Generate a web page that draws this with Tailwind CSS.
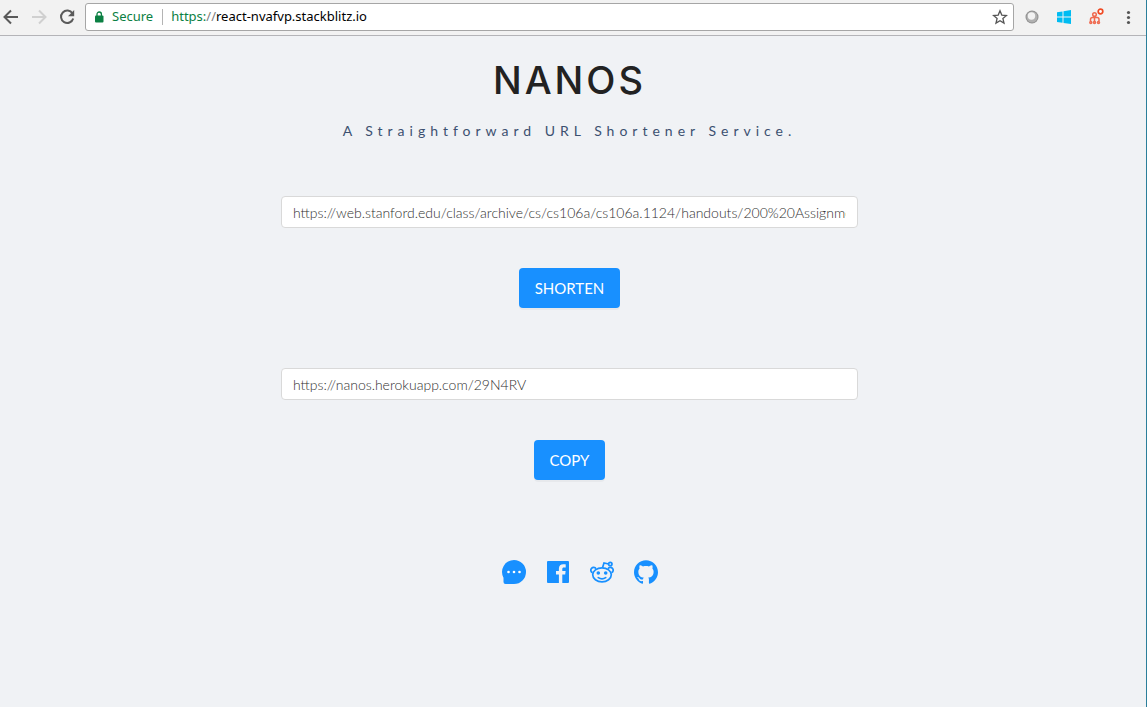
<!DOCTYPE html>
<html lang="en">
<head>
<meta charset="utf-8">
<meta name="viewport" content="width=device-width, initial-scale=1">
<title>Nanos</title>
<script src="https://cdn.jsdelivr.net/npm/@tailwindcss/browser@4"></script>
</head>
<body class="flex min-h-screen flex-col border-r border-[#2b7f9b] bg-[#f0f2f5]">
<header class="flex h-9 shrink-0 items-center border-b border-[#b4b4b8] bg-[#f2f2f2] pb-px font-['Noto_Sans',sans-serif]">
  <nav class="flex w-[85px] shrink-0 items-center gap-3" aria-label="Browser">
    <button aria-label="Back" class="size-4 ml-[3px] text-[#5a5a5a]"><svg class="size-4" viewBox="0 0 16 16" fill="none" stroke="currentColor" stroke-width="2"><path d="M15 8H2M8 1.5 1.5 8 8 14.500"/></svg></button>
    <button aria-label="Forward" class="size-4 text-[#d0d0d0]"><svg class="size-4" viewBox="0 0 16 16" fill="none" stroke="currentColor" stroke-width="2"><path d="M1 8h13M8 1.500 14.500 8 8 14.500"/></svg></button>
    <button aria-label="Reload" class="size-4 text-[#5a5a5a]"><svg class="size-4" viewBox="0 0 16 16" fill="none" stroke="currentColor" stroke-width="2"><path d="M13.500 4.500A6.200 6.200 0 1 0 14.200 9.500"/><path d="M15.200 1v6.200H9z" fill="currentColor" stroke="none"/></svg></button>
  </nav>
  <div class="flex h-7 min-w-0 flex-1 items-center rounded-[3px] border border-[#a6a6a6] bg-white px-2 text-[13px]">
    <svg class="mr-2 h-3 w-[10px] shrink-0" viewBox="0 0 10 12"><rect x="1" y="4.500" width="8.500" height="7" rx="1" fill="#0b8043"/><path d="M3 5V3.200a2.200 2.200 0 0 1 4.400 0V5" fill="none" stroke="#0b8043" stroke-width="1.300"/></svg>
    <span class="text-[#0b8043]">Secure</span>
    <span class="ml-[9px] mr-2 h-4 w-px bg-[#b4b4b4]"></span>
    <span class="flex-1 truncate text-black"><span class="text-[#0b8043]">https:</span><span class="text-[#808080]">//</span>react-nvafvp.stackblitz.io</span>
    <button aria-label="Bookmark" class="-mr-2 w-[25px]"><svg class="size-4 ml-1" viewBox="0 0 16 16" fill="none" stroke="#555" stroke-width="1.300"><path d="m8 1.800 1.800 4.300 4.700.4-3.600 3 1.100 4.600L8 11.700l-4 2.400 1.100-4.600-3.600-3 4.700-.4z"/></svg></button>
  </div>
  <div class="flex shrink-0 items-center gap-4 pl-[10px] pr-[10px]">
    <button aria-label="Extension" class="size-4"><svg class="size-4" viewBox="0 0 16 16"><circle cx="8" cy="8" r="6.500" fill="#8f8f8f"/><circle cx="8" cy="8" r="5.500" fill="#b0b0b0"/><circle cx="7.500" cy="7" r="3.700" fill="#f2f2f2"/></svg></button>
    <button aria-label="Windows" class="size-4"><svg class="size-4" viewBox="0 0 16 16" fill="#00bcf2"><path d="M1 3.200 6.500 2.400V7.500H1zM7.500 2.200 15 1v6.500H7.500zM1 8.500h5.500v5.200L1 12.900zM7.500 8.500H15V15l-7.500-1.100z"/></svg></button>
    <button aria-label="Network" class="size-4"><svg class="size-4 overflow-visible" viewBox="0 0 16 16" fill="none" stroke="#ef6a50" stroke-width="1.500"><circle cx="6.500" cy="5.500" r="1.800"/><path d="M6.500 7v6M2.500 12v-1.500q0-2 2-2h4.500q2 0 2 2V12"/><circle cx="2.800" cy="13.500" r="1"/><circle cx="6.500" cy="13.500" r="1"/><circle cx="10.500" cy="13.500" r="1"/><circle cx="12.500" cy="2.500" r="2.300" fill="#fff" stroke="#f04a24" stroke-width="1.700"/></svg></button>
    <button aria-label="Menu" class="size-4"><svg class="size-4" viewBox="0 0 16 16" fill="#555"><circle cx="8.500" cy="3.500" r="1.600"/><circle cx="8.500" cy="8.500" r="1.600"/><circle cx="8.500" cy="13.500" r="1.600"/></svg></button>
  </div>
</header>
<main class="flex flex-1 flex-col items-center pl-4 pr-[23px] font-['Lato',sans-serif]">
  <h1 class="mt-5 text-[38px] leading-[48px] font-medium tracking-[3px] text-[#222] font-['Inter',sans-serif]">NANOS</h1>
  <p class="mt-4 text-sm leading-[22px] tracking-[5px] text-[#3c5070]">A Straightforward URL Shortener Service.</p>
  <form class="mt-[54px] flex w-full max-w-[577px] flex-col items-center" onsubmit="return false">
    <input type="text" aria-label="Long URL" value="https://web.stanford.edu/class/archive/cs/cs106a/cs106a.1124/handouts/200%20Assignments.pdf" class="h-8 w-full rounded border border-[#d9d9d9] bg-white px-[11px] text-sm font-light text-[#303030]">
    <button class="mt-10 h-10 rounded bg-[#1890ff] px-4 text-[15px] text-white shadow-[0_2px_0_rgba(0,0,0,0.035)]">SHORTEN</button>
    <input type="text" aria-label="Short URL" value="https://nanos.herokuapp.com/29N4RV" class="mt-[60px] h-8 w-full rounded border border-[#d9d9d9] bg-white px-[11px] text-sm font-light text-[#303030]">
    <button type="button" class="mt-10 h-10 rounded bg-[#1890ff] px-4 text-[15px] text-white shadow-[0_2px_0_rgba(0,0,0,0.035)]">COPY</button>
  </form>
  <nav class="mt-20 flex gap-5 pl-5 text-[#1890ff]" aria-label="Social">
    <a href="#" aria-label="Chat"><svg class="size-6" viewBox="0 0 24 24"><path fill="currentColor" d="M12 0a12 12 0 1 1 0 24H3.500Q1.500 24 1.500 22v-4.200A12 12 0 0 1 12 0z"/><g fill="#fff"><circle cx="6.500" cy="12" r="1.300"/><circle cx="12" cy="12" r="1.300"/><circle cx="17.500" cy="12" r="1.300"/></g></svg></a>
    <a href="#" aria-label="Facebook"><svg class="size-6" viewBox="0 0 24 24" fill="currentColor"><path d="M2 1h20q1 0 1 1v20q0 1-1 1h-5.700v-8.500h2.900l.4-3.400h-3.300V9c0-1 .3-1.600 1.700-1.600h1.700v-3c-.3 0-1.300-.1-2.500-.1-2.500 0-4.300 1.500-4.300 4.400v2.400H10v3.400h2.900V23H2q-1 0-1-1V2q0-1 1-1z"/></svg></a>
    <a href="#" aria-label="Reddit"><svg class="size-6" viewBox="0 0 24 24" fill="none" stroke="currentColor" stroke-width="1.700"><ellipse cx="12" cy="14.800" rx="9.300" ry="7"/><path d="M12.500 7.800 14 3l4.600 1M6 8.700a2.800 2.800 0 1 0-3.600 4M18 8.700a2.800 2.800 0 1 1 3.600 4"/><circle cx="20.300" cy="4" r="1.700"/><path d="M8.300 17.600q3.700 2.600 7.400 0" stroke-linecap="round"/><g fill="currentColor" stroke="none"><circle cx="8.300" cy="13" r="1.800"/><circle cx="15.700" cy="13" r="1.800"/></g></svg></a>
    <a href="#" aria-label="GitHub"><svg class="size-6" viewBox="0 0 24 24" fill="currentColor"><path d="M12 .297c-6.630 0-12 5.373-12 12 0 5.303 3.438 9.800 8.205 11.385.6.113.82-.258.82-.577 0-.285-.01-1.040-.015-2.040-3.338.724-4.042-1.610-4.042-1.610C4.422 18.070 3.633 17.700 3.633 17.700c-1.087-.744.084-.729.084-.729 1.205.084 1.838 1.236 1.838 1.236 1.070 1.835 2.809 1.305 3.495.998.108-.776.417-1.305.760-1.605-2.665-.3-5.466-1.332-5.466-5.930 0-1.310.465-2.380 1.235-3.220-.135-.303-.54-1.523.105-3.176 0 0 1.005-.322 3.300 1.230.96-.267 1.980-.399 3-.405 1.020.006 2.040.138 3 .405 2.280-1.552 3.285-1.230 3.285-1.230.645 1.653.24 2.873.12 3.176.765.840 1.230 1.910 1.230 3.220 0 4.610-2.805 5.625-5.475 5.920.42.360.81 1.096.81 2.220 0 1.606-.015 2.896-.015 3.286 0 .315.210.69.825.57C20.565 22.092 24 17.592 24 12.297c0-6.627-5.373-12-12-12"/></svg></a>
  </nav>
</main>
</body>
</html>
